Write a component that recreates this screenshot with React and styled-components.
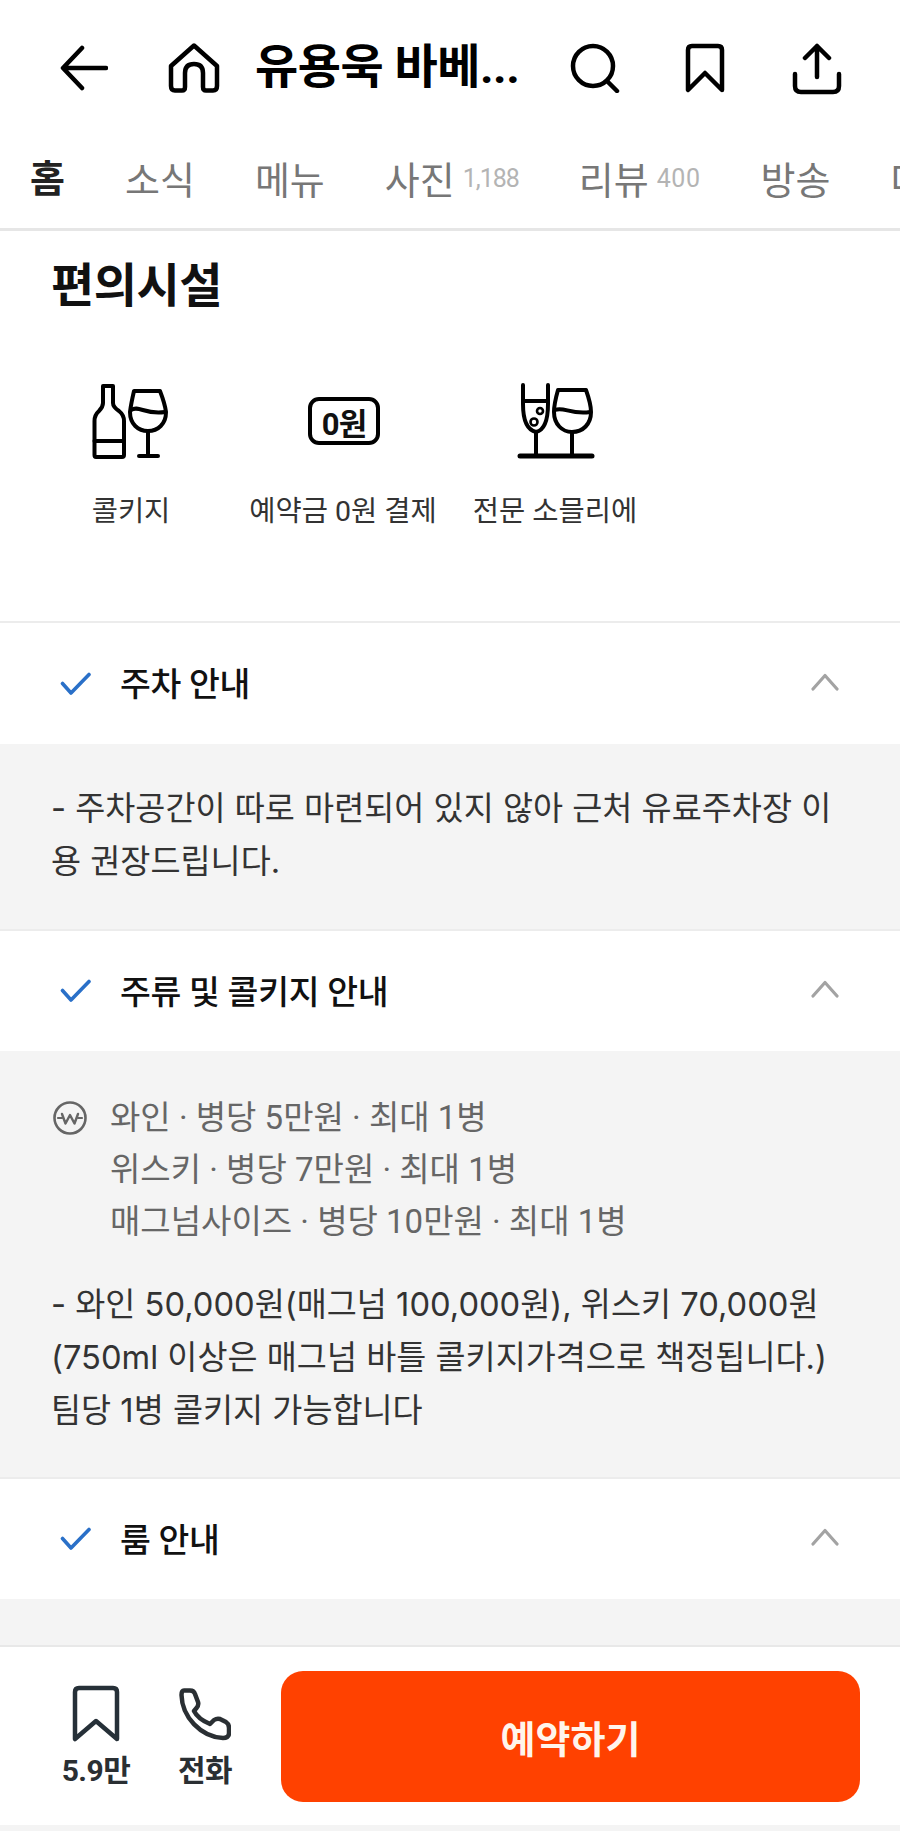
import React from "react";
import styled, { createGlobalStyle } from "styled-components";

const Global = createGlobalStyle`
  html, body { margin: 0; padding: 0; background: #fff; }
  body { font-family: "Roboto", "Noto Sans CJK KR", "Noto Sans", sans-serif; }
  * { box-sizing: border-box; }
`;

const Page = styled.div`
  width: 900px;
  height: 1831px;
  display: flex;
  flex-direction: column;
  overflow: hidden;
  background: #fff;
`;

const Header = styled.header`
  height: 137px;
  flex: none;
  display: flex;
  align-items: flex-start;
  padding: 43px 0 0 60px;
`;

const IconSlot = styled.span`
  display: flex;
  flex: none;
  width: ${(p) => p.$w}px;
  margin-left: ${(p) => p.$ml || 0}px;
`;

const Title = styled.h1`
  margin: 0 0 0 35px;
  width: 267px;
  flex: none;
  font-size: 47px;
  line-height: 48px;
  font-weight: 700;
  color: #000;
  letter-spacing: -0.5px;
  white-space: nowrap;
`;

const Tabs = styled.nav`
  height: 94px;
  flex: none;
  display: flex;
  align-items: stretch;
  border-bottom: 3px solid #e6e6e6;
  overflow: hidden;
`;

const Tab = styled.div`
  flex: none;
  display: flex;
  align-items: center;
  gap: 8px;
  padding: 0 30px 14px;
  height: 94px;
  font-size: 38px;
  font-weight: ${(p) => (p.$active ? 700 : 400)};
  color: ${(p) => (p.$active ? "#222" : "#777")};
  border-bottom: ${(p) => (p.$active ? "3px solid #222" : "0")};
`;

const Count = styled.span`
  font-size: 25px;
  letter-spacing: ${(p) => p.$ls}px;
  color: #b4b4b4;
  margin-top: 3px;
`;

const Amenities = styled.section`
  height: 392px;
  flex: none;
  padding-top: 27px;
  border-bottom: 2px solid #ececec;
`;

const SectionTitle = styled.h2`
  margin: 0 0 0 51px;
  font-size: 47px;
  line-height: 56px;
  font-weight: 700;
  color: #111;
  letter-spacing: -0.5px;
`;

const AmenityRow = styled.div`
  display: flex;
  padding: 67px 0 0 25px;
`;

const Amenity = styled.div`
  width: 212px;
  flex: none;
  display: flex;
  flex-direction: column;
  align-items: center;
`;

const AmenityIcon = styled.div`
  height: 80px;
  display: flex;
  align-items: center;
  justify-content: center;
  margin-left: ${(p) => p.$shift || 0}px;
`;

const WonBadge = styled.div`
  width: 72px;
  height: 48px;
  border: 4px solid #000;
  border-radius: 11px;
  display: flex;
  align-items: center;
  justify-content: center;
  font-size: 31px;
  font-weight: 700;
  color: #111;
  letter-spacing: -1px;
`;

const AmenityLabel = styled.div`
  margin-top: 33px;
  font-size: 28.5px;
  line-height: 36px;
  color: #333;
  white-space: nowrap;
`;

const AccordionHead = styled.div`
  height: ${(p) => p.$h}px;
  flex: none;
  display: flex;
  align-items: center;
  padding: 0 60px 0 60px;
  background: #fff;
`;

const AccordionTitle = styled.div`
  flex: 1;
  margin: 0 0 4px 28px;
  font-size: 33.5px;
  font-weight: 500;
  color: #111;
  letter-spacing: -0.3px;
`;

const ChevronSlot = styled.span`
  display: flex;
  margin-bottom: 4px;
`;

const Body = styled.div`
  flex: none;
  background: #f4f4f4;
  height: ${(p) => p.$h}px;
  padding: ${(p) => p.$pt}px 51px 0;
  border-bottom: 2px solid #ececec;
`;

const Para = styled.p`
  margin: 0;
  font-family: "Inter", "Noto Sans CJK KR", sans-serif;
  font-size: 32.7px;
  line-height: 53px;
  color: #333;
  white-space: nowrap;
`;

const Corkage = styled.div`
  display: flex;
  gap: 23px;
  margin-bottom: 30px;
`;

const CorkageIcon = styled.span`
  flex: none;
  display: flex;
  margin: 9px 0 0 2px;
  height: 36px;
`;

const CorkageLines = styled.div`
  font-size: 33px;
  line-height: 52px;
  color: #666;
  white-space: nowrap;
`;

const Spacer = styled.div`
  flex: 1;
  background: #f4f4f4;
`;

const Footer = styled.footer`
  flex: none;
  height: 186px;
  border-top: 2px solid #e8e8e8;
  border-bottom: 6px solid #f4f4f4;
  background: #fff;
  display: flex;
  align-items: flex-start;
  padding: 24px 40px 0 41px;
`;

const Action = styled.div`
  flex: none;
  width: ${(p) => p.$w}px;
  display: flex;
  flex-direction: column;
  align-items: center;
  padding-top: 13px;
`;

const ActionIcon = styled.div`
  height: 60px;
  display: flex;
  align-items: center;
`;

const ActionLabel = styled.div`
  margin-top: 9px;
  font-size: 30px;
  line-height: 36px;
  font-weight: 700;
  color: #2a2f33;
  white-space: nowrap;
  letter-spacing: -0.5px;
`;

const BookButton = styled.button`
  flex: 1;
  margin-left: 22px;
  height: 131px;
  border: 0;
  border-radius: 22px;
  background: #ff4100;
  color: #fff5ec;
  font-family: inherit;
  font-size: 38px;
  font-weight: 700;
  padding: 0;
`;

const Ico = ({ w, h, children, sw = 4.5, stroke = "#000" }) => (
  <svg width={w} height={h} viewBox={`0 0 ${w} ${h}`} fill="none" stroke={stroke} strokeWidth={sw} strokeLinecap="round" strokeLinejoin="round">
    {children}
  </svg>
);

const Check = () => (
  <Ico w={32} h={24} sw={3.6} stroke="#2a70c8">
    <path d="M2.5 11.5 L11 21 L29 2.5" />
  </Ico>
);

const Chevron = () => (
  <ChevronSlot>
    <Ico w={30} h={18} sw={3.2} stroke="#a3a3a3">
      <path d="M3 16 L15 2.5 L27 16" />
    </Ico>
  </ChevronSlot>
);

const Section = ({ title, h = 120 }) => (
  <AccordionHead $h={h}>
    <Check />
    <AccordionTitle>{title}</AccordionTitle>
    <Chevron />
  </AccordionHead>
);

export default function App() {
  return (
    <Page>
      <Global />
      <Header>
        <IconSlot $w={48}>
          <Ico w={48} h={48}>
            <path d="M46 25 H4 M22 5 L3 25 L22 45" />
          </Ico>
        </IconSlot>
        <IconSlot $w={52} $ml={60}>
          <Ico w={52} h={50}>
            <path d="M26 2.5 L49 23 V43 Q49 47.500 45 47.500 H38 Q35 47.500 35 44 V30 Q35 21 26 21 Q17 21 17 30 V44 Q17 47.500 14 47.500 H7 Q3 47.500 3 43 V23 Z" />
          </Ico>
        </IconSlot>
        <Title>유용욱 바베...</Title>
        <IconSlot $w={50} $ml={48}>
          <Ico w={50} h={50}>
            <circle cx="23" cy="23" r="20" />
            <path d="M37 38 L47 48" />
          </Ico>
        </IconSlot>
        <IconSlot $w={40} $ml={65}>
          <Ico w={40} h={50}>
            <path d="M3 7 Q3 3 7 3 H33 Q37 3 37 7 V47 L20 30 L3 47 Z" />
          </Ico>
        </IconSlot>
        <IconSlot $w={50} $ml={67}>
          <Ico w={50} h={52}>
            <path d="M25 34 V3 M13 15 L25 3 L37 15 M3 31 V43 Q3 49 9 49 H41 Q47 49 47 43 V31" />
          </Ico>
        </IconSlot>
      </Header>

      <Tabs>
        <Tab $active>홈</Tab>
        <Tab>소식</Tab>
        <Tab>메뉴</Tab>
        <Tab>
          사진<Count $ls={-1}>1,188</Count>
        </Tab>
        <Tab>
          리뷰<Count $ls={0.5}>400</Count>
        </Tab>
        <Tab>방송</Tab>
        <Tab>더보기</Tab>
      </Tabs>

      <Amenities>
        <SectionTitle>편의시설</SectionTitle>
        <AmenityRow>
          <Amenity>
            <AmenityIcon>
              <Ico w={78} h={78} sw={4}>
                <path d="M11 4 H21 V21 Q21 25 27 29 Q32 33 32 39 V73 Q32 75 30 75 H4 Q2.500 75 2.500 73 V39 Q2.500 33 7 29 Q11 25 11 21 Z" />
                <path d="M2.500 59 H32" />
                <path d="M42 9 H68 Q73 22 74 30 C74 42 66 49 56 49 C46 49 38 42 38 30 Q39 22 42 9 Z" />
                <path d="M39 28 C47 23 53 33 73 30" />
                <path d="M56 49 V74 M47 74 H66" />
              </Ico>
            </AmenityIcon>
            <AmenityLabel>콜키지</AmenityLabel>
          </Amenity>
          <Amenity>
            <AmenityIcon $shift={2}>
              <WonBadge>0원</WonBadge>
            </AmenityIcon>
            <AmenityLabel>예약금 0원 결제</AmenityLabel>
          </Amenity>
          <Amenity>
            <AmenityIcon $shift={2}>
              <Ico w={78} h={78} sw={4}>
                <path d="M6 3 V22 C6 38 10 48 19 50 C28 48 31 38 31 22 V3" />
                <path d="M6 19 H31" />
                <circle cx="23" cy="29" r="3" strokeWidth="2.6" />
                <circle cx="17" cy="40" r="3.500" strokeWidth="2.6" />
                <path d="M19 50 V73 M55 50 V73" />
                <path d="M41 8 H69 Q74 22 74 30 C74 42 66 50 55 50 C45 50 37 42 37 30 Q37 22 41 8 Z" />
                <path d="M38 28 C46 24 54 33 73 30" />
                <path d="M3 74 H75" strokeWidth="5" />
              </Ico>
            </AmenityIcon>
            <AmenityLabel>전문 소믈리에</AmenityLabel>
          </Amenity>
        </AmenityRow>
      </Amenities>

      <Section title="주차 안내" h={121} />
      <Body $h={187} $pt={38}>
        <Para>
          - 주차공간이 따로 마련되어 있지 않아 근처 유료주차장 이
          <br />용 권장드립니다.
        </Para>
      </Body>

      <Section title="주류 및 콜키지 안내" />
      <Body $h={428} $pt={41}>
        <Corkage>
          <CorkageIcon>
            <Ico w={34} h={34} sw={2.6} stroke="#666">
              <circle cx="17" cy="17" r="15.500" />
              <path d="M9 13 L12.500 22.500 L17 14 L21.500 22.500 L25 13" strokeWidth="2.400" />
              <path d="M5 17 H9 M25 17 H29" strokeWidth="2.200" />
            </Ico>
          </CorkageIcon>
          <CorkageLines>
            와인 · 병당 5만원 · 최대 1병
            <br />위스키 · 병당 7만원 · 최대 1병
            <br />매그넘사이즈 · 병당 10만원 · 최대 1병
          </CorkageLines>
        </Corkage>
        <Para>
          - 와인 50,000원(매그넘 100,000원), 위스키 70,000원
          <br />(750ml 이상은 매그넘 바틀 콜키지가격으로 책정됩니다.)
          <br />팀당 1병 콜키지 가능합니다
        </Para>
      </Body>

      <Section title="룸 안내" />
      <Spacer />

      <Footer>
        <Action $w={110}>
          <ActionIcon>
            <Ico w={48} h={58} sw={4.5} stroke="#263038">
              <path d="M3 7 Q3 3 7 3 H41 Q45 3 45 7 V54 L24 36 L3 54 Z" />
            </Ico>
          </ActionIcon>
          <ActionLabel>5.9만</ActionLabel>
        </Action>
        <Action $w={108}>
          <ActionIcon>
            <Ico w={52} h={54} sw={4.5} stroke="#2a2f33">
              <path d="M5 3.500 H11 Q15 3.500 16 7 L19 15 Q20 18 17.500 21 L15 24 Q19 32 31 37 L35 33 Q38 31 41 32 L47 35 Q50 37 50 41 V46 Q50 51 44 51 C22 50 3 30 2.500 8 Q2.500 3.500 5 3.500 Z" />
            </Ico>
          </ActionIcon>
          <ActionLabel>전화</ActionLabel>
        </Action>
        <BookButton>예약하기</BookButton>
      </Footer>
    </Page>
  );
}
